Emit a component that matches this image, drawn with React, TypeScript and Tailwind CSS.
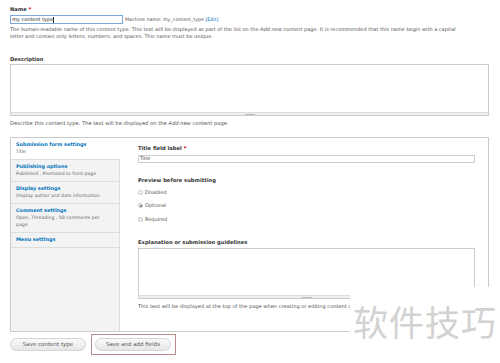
import React from "react";

function Grippie({ handle }: { handle: string }) {
  return (
    <div className="h-[3px] bg-[#eeeeee] border-t border-[#dddddd] flex justify-center items-center">
      <div className={`h-[1px] bg-[#bbbbbb] ${handle}`} />
    </div>
  );
}

function Radio({ label, checked }: { label: string; checked?: boolean }) {
  return (
    <div className="flex items-center h-[7px] gap-[2px]">
      <div className="w-[5px] h-[5px] rounded-full border border-[#c4c4c4] bg-[#f2f2f2] flex items-center justify-center">
        {checked && <div className="w-[2px] h-[2px] rounded-full bg-[#666]" />}
      </div>
      <span className="text-[5px] leading-[7px] text-[#555]">{label}</span>
    </div>
  );
}

function Tab({
  title,
  sub,
  active,
}: {
  title: string;
  sub?: React.ReactNode;
  active?: boolean;
}) {
  return (
    <div
      className={`pl-[5px] pr-[3px] pt-[3px] pb-[4px] border-b border-[#dddddd] ${
        active ? "bg-white -mr-[1px] relative" : ""
      }`}
    >
      <div className="text-[4.9px] leading-[7px] font-bold text-[#0074bd] whitespace-nowrap">{title}</div>
      {sub && <div className="text-[4.6px] leading-[7px] text-[#666] whitespace-nowrap">{sub}</div>}
    </div>
  );
}

export default function App() {
  return (
    <div className="relative w-[500px] h-[363px] overflow-hidden bg-white font-['DejaVu_Sans',Verdana,sans-serif] text-[#333]">
      <div className="pl-[10px] pr-[11px] pt-[6px]">
        <div className="text-[5.2px] font-bold leading-[7px] text-[#333]">
          Name <span className="text-[#cc0000]">*</span>
        </div>
        <div className="mt-[2px] flex items-center">
          <div className="w-[113px] h-[9px] border border-[#7ea9dc] bg-white flex items-center pl-[1px] text-[5px] text-[#222]">
            my content type<span className="w-[0.5px] h-[6px] bg-[#222]" />
          </div>
          <span className="ml-[2px] text-[4.75px] text-[#555] whitespace-nowrap">
            Machine name: my_content_type <span className="text-[#0074bd]">[Edit]</span>
          </span>
        </div>
        <div className="mt-[2px] text-[5px] leading-[7px] text-[#555] whitespace-nowrap">
          The human-readable name of this content type. This text will be displayed as part of the list on the{" "}
          <em>Add new content</em> page. It is recommended that this name begin with a capital
          <br />
          letter and contain only letters, numbers, and spaces. This name must be unique.
        </div>

        <div className="mt-[16px] text-[5.2px] font-bold leading-[7px] text-[#333]">Description</div>
        <div className="mt-[1px] border border-[#cccccc] bg-white">
          <div className="h-[47px]" />
          <Grippie handle="w-[10px]" />
        </div>
        <div className="mt-[4px] text-[5.2px] leading-[7px] text-[#555] whitespace-nowrap">
          Describe this content type. The text will be displayed on the <em>Add new content</em> page.
        </div>

        <div className="mt-[10px] h-[195px] border border-[#cccccc] flex">
          <div className="w-[109px] shrink-0 bg-[#f3f3f3] border-r border-[#dddddd]">
            <Tab title="Submission form settings" sub="Title" active />
            <Tab title="Publishing options" sub="Published , Promoted to front page" />
            <Tab title="Display settings" sub="Display author and date information." />
            <Tab
              title="Comment settings"
              sub={
                <>
                  Open, Threading , 50 comments per
                  <br />
                  page
                </>
              }
            />
            <Tab title="Menu settings" />
          </div>
          <div className="flex-1 pl-[18px] pr-[13px] pt-[7px]">
            <div className="text-[5.2px] font-bold leading-[7px] text-[#333]">
              Title field label <span className="text-[#cc0000]">*</span>
            </div>
            <div className="mt-[3px] h-[8px] border border-[#cccccc] flex items-center pl-[1px] text-[4.8px] text-[#444]">
              Title
            </div>
            <div className="mt-[14px] text-[5.2px] font-bold leading-[7px] text-[#333]">Preview before submitting</div>
            <div className="mt-[4.5px] flex flex-col gap-[6.7px]">
              <Radio label="Disabled" />
              <Radio label="Optional" checked />
              <Radio label="Required" />
            </div>
            <div className="mt-[16.5px] text-[5.2px] font-bold leading-[7px] text-[#333]">
              Explanation or submission guidelines
            </div>
            <div className="mt-[2px] border border-[#cccccc] bg-white">
              <div className="h-[46px]" />
              <Grippie handle="w-[10px]" />
            </div>
            <div className="mt-[4px] w-[213px] overflow-hidden text-[5.1px] leading-[7px] text-[#555] whitespace-nowrap">
              This text will be displayed at the top of the page when creating or editing content of this type.
            </div>
          </div>
        </div>

        <div className="mt-[2px] flex items-center">
          <button className="w-[76px] h-[13px] rounded-full border border-[#d4d4d4] bg-gradient-to-b from-[#fafafa] to-[#e6e6e6] text-[5.5px] text-[#5a5a5a] flex items-center justify-center">
            Save content type
          </button>
          <div className="ml-[5px] border border-[#b88a8a] p-[3px] pr-[4px]">
            <button className="w-[76px] h-[13px] rounded-full border border-[#d4d4d4] bg-gradient-to-b from-[#fafafa] to-[#e6e6e6] text-[5.5px] text-[#5a5a5a] flex items-center justify-center">
              Save and add fields
            </button>
          </div>
        </div>
      </div>

      <div className="absolute left-[350px] top-[287px] w-[150px] h-[76px] bg-white flex items-center justify-center">
        <span className="mt-[-10px] text-[35px] leading-none text-[#d2d2d2] font-['Noto_Sans_CJK_SC',sans-serif] tracking-[1px]">
          软件技巧
        </span>
      </div>
    </div>
  );
}
